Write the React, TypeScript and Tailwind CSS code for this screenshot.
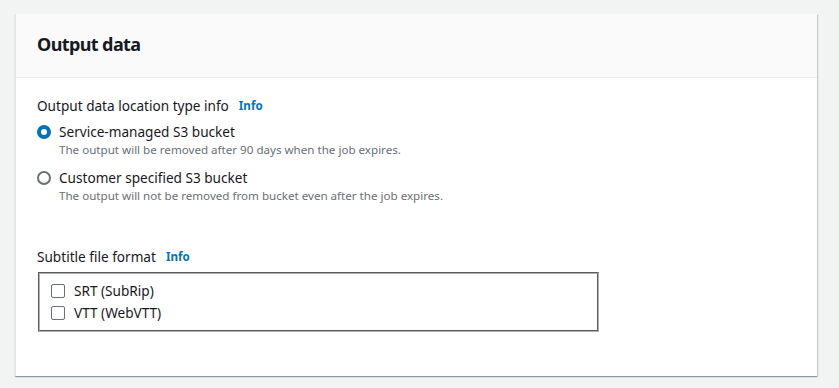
const font = "font-['Noto_Sans',sans-serif]";

function InfoLink() {
  return (
    <span className="ml-[10px] text-[11.6px] font-bold text-[#0073bb]">Info</span>
  );
}

function Radio({ checked }: { checked: boolean }) {
  if (checked) {
    return (
      <span className="flex h-[14px] w-[14px] shrink-0 items-center justify-center rounded-full bg-[#0073bb]">
        <span className="h-[6px] w-[6px] rounded-full bg-white" />
      </span>
    );
  }
  return (
    <span className="h-[14px] w-[14px] shrink-0 rounded-full border-2 border-[#687078] bg-white" />
  );
}

const options = [
  {
    label: "Service-managed S3 bucket",
    description: "The output will be removed after 90 days when the job expires.",
    checked: true,
  },
  {
    label: "Customer specified S3 bucket",
    description:
      "The output will not be removed from bucket even after the job expires.",
    checked: false,
  },
];

const formats = ["SRT (SubRip)", "VTT (WebVTT)"];

export default function App() {
  return (
    <div className={`${font} min-h-[388px] bg-[#f2f3f3] pt-[14px] pl-[15px]`}>
      <div className="w-[802px] border-l border-[#e4e6e6] bg-white shadow-[0_1px_1px_0_rgba(0,28,36,0.3),1px_1px_1px_0_rgba(0,28,36,0.15)]">
        <div className="flex h-[64px] items-center border-b border-[#eaeded] bg-[#fafafa] px-[21px] pb-[3px]">
          <h2 className="text-[18px] font-bold tracking-[-0.6px] text-[#16191f]">Output data</h2>
        </div>

        <div className="px-[21px] pt-[18px] pb-[44px] text-[#16191f]">
          <div className="flex h-[20px] items-center text-[13.6px]">
            Output data location type info
            <InfoLink />
          </div>

          <div className="mt-[6px] flex flex-col gap-[10px]">
            {options.map((o) => (
              <div key={o.label}>
                <div className="flex h-[20px] items-center gap-[8px] text-[13.6px]">
                  <Radio checked={o.checked} />
                  {o.label}
                </div>
                <div className="ml-[22px] h-[16px] text-[11.6px] leading-[16px] text-[#687078]">
                  {o.description}
                </div>
              </div>
            ))}
          </div>

          <div className="mt-[43px] flex h-[20px] items-center text-[13.6px]">
            Subtitle file format
            <InfoLink />
          </div>

          <div className="mt-[5px] ml-[1px] flex h-[60px] w-[561px] flex-col justify-center gap-[2px] border-2 border-[#b0b0b0] px-[11px] [border-style:groove]">
            {formats.map((f) => (
              <div key={f} className="flex h-[20px] items-center gap-[9px] text-[13.6px]">
                <span className="h-[14px] w-[14px] shrink-0 rounded-[2px] border border-[#687078] bg-white" />
                {f}
              </div>
            ))}
          </div>
        </div>
      </div>
    </div>
  );
}
